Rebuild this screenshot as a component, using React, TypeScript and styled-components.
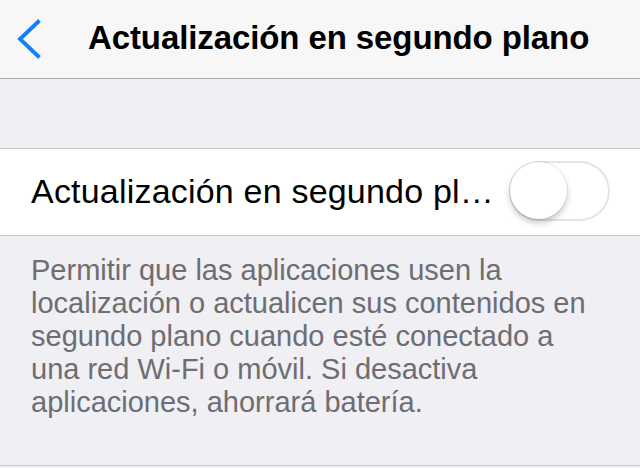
import React from "react";
import styled, { createGlobalStyle } from "styled-components";

const GlobalStyle = createGlobalStyle`
  html, body {
    margin: 0;
    padding: 0;
    background: #efeff4;
  }
  body {
    font-family: "Liberation Sans", Helvetica, Arial, sans-serif;
    -webkit-font-smoothing: antialiased;
  }
`;

const Screen = styled.div`
  width: 640px;
  height: 468px;
  display: flex;
  flex-direction: column;
  background: #efeff4;
  overflow: hidden;
`;

const NavBar = styled.header`
  height: 78px;
  flex: none;
  display: flex;
  align-items: center;
  padding-left: 16px;
  background: #f7f7f7;
  border-bottom: 1px solid #a9a9ac;
`;

const BackButton = styled.button`
  width: 26px;
  height: 40px;
  padding: 0;
  border: none;
  background: none;
  display: flex;
  align-items: center;
  justify-content: center;
  margin-bottom: 1px;
`;

const Title = styled.h1`
  margin: 0 0 2px 46px;
  font-size: 33px;
  font-weight: 700;
  color: #000;
  white-space: nowrap;
  letter-spacing: -0.1px;
`;

const GroupGap = styled.div`
  height: 69px;
  flex: none;
  border-bottom: 1px solid #c8c7cc;
`;

const Row = styled.div`
  height: 86px;
  flex: none;
  display: flex;
  align-items: center;
  padding: 0 30px 0 31px;
  background: #fff;
  border-bottom: 1px solid #c8c7cc;
`;

const RowLabel = styled.span`
  flex: 1;
  min-width: 0;
  margin-right: 12px;
  margin-top: -2px;
  font-size: 34px;
  letter-spacing: 0.2px;
  color: #000;
  white-space: nowrap;
`;

const Track = styled.div<{ $on: boolean }>`
  width: 101px;
  height: 60px;
  flex: none;
  box-sizing: border-box;
  border-radius: 30px;
  display: flex;
  align-items: center;
  justify-content: ${(p) => (p.$on ? "flex-end" : "flex-start")};
  padding: 0 1px;
  background: ${(p) => (p.$on ? "#4cd964" : "#fff")};
  box-shadow: inset 0 0 0 2px #e5e5e5;
  margin-top: -3px;
`;

const Knob = styled.div`
  width: 57px;
  height: 57px;
  border-radius: 50%;
  background: #fff;
  box-shadow: 0 0 0 1px rgba(0, 0, 0, 0.06), 0 4px 6px rgba(0, 0, 0, 0.22);
`;

const Footer = styled.div`
  flex: none;
  height: 230px;
  box-sizing: border-box;
  padding: 18px 20px 0 31px;
  border-bottom: 1px solid #c8c7cc;
  color: #6d6d72;
  font-size: 29px;
  line-height: 33px;
`;

const Chevron = () => (
  <svg width="26" height="40" viewBox="0 0 26 40" aria-hidden="true">
    <polyline
      points="23.5,1.5 4,20 23.5,38.5"
      fill="none"
      stroke="#137efa"
      strokeWidth="3.8"
      strokeLinecap="butt"
      strokeLinejoin="miter"
    />
  </svg>
);

export default function App() {
  const [on, setOn] = React.useState(false);
  return (
    <>
      <GlobalStyle />
      <Screen>
        <NavBar>
          <BackButton aria-label="Atrás">
            <Chevron />
          </BackButton>
          <Title>Actualización en segundo plano</Title>
        </NavBar>
        <GroupGap />
        <Row>
          <RowLabel>Actualización en segundo pl…</RowLabel>
          <Track $on={on} onClick={() => setOn(!on)} role="switch" aria-checked={on}>
            <Knob />
          </Track>
        </Row>
        <Footer>
          Permitir que las aplicaciones usen la
          <br />
          localización o actualicen sus contenidos en
          <br />
          segundo plano cuando esté conectado a
          <br />
          una red Wi-Fi o móvil. Si desactiva
          <br />
          aplicaciones, ahorrará batería.
        </Footer>
      </Screen>
    </>
  );
}
